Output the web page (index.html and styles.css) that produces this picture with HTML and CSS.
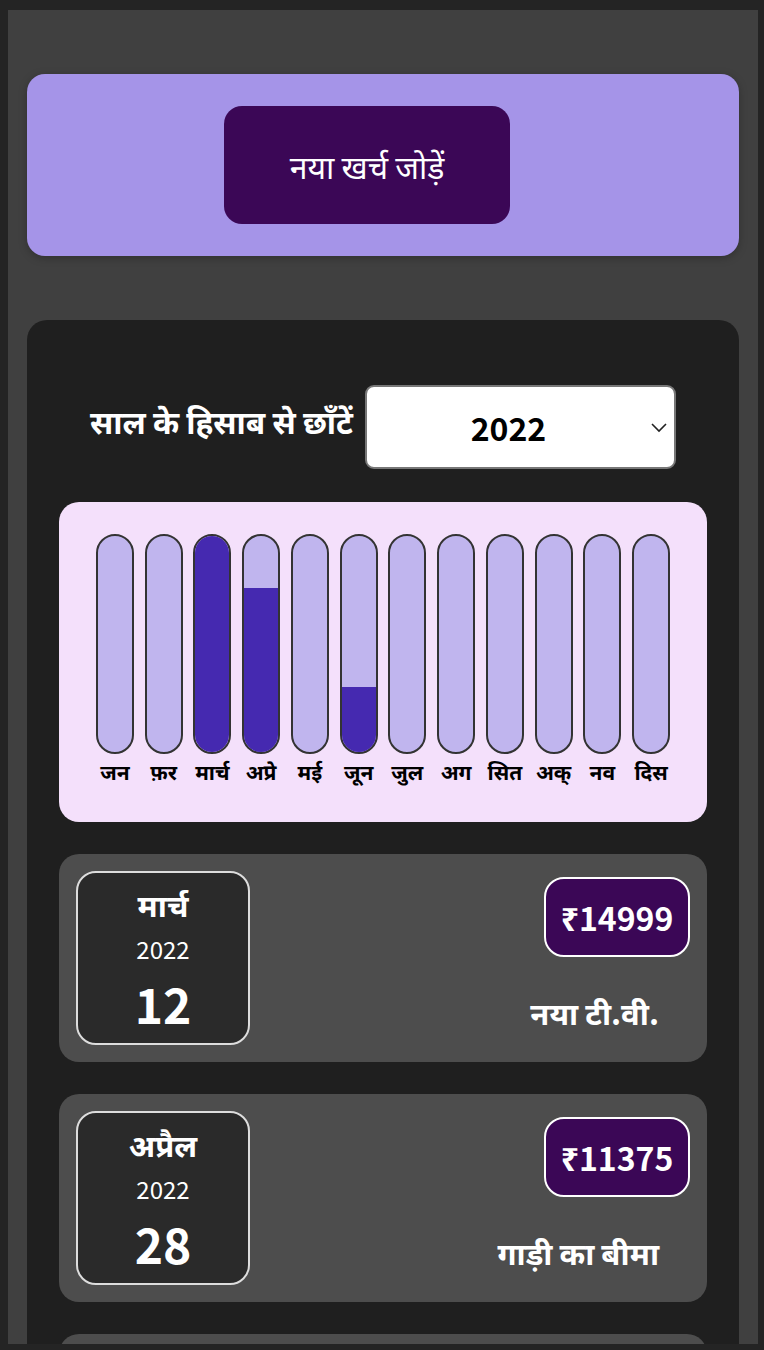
FILE: index.html
```html
<!DOCTYPE html>
<html lang="hi">
<head>
<meta charset="utf-8">
<title>खर्च</title>
<link rel="stylesheet" href="styles.css">
</head>
<body>
<div class="app">
  <section class="new-expense">
    <button class="add-btn" type="button">नया खर्च जोड़ें</button>
  </section>

  <section class="expenses">
    <div class="filter">
      <label class="filter-label" for="year">साल के हिसाब से छाँटें</label>
      <div class="select-wrap">
        <select id="year" class="year-select">
          <option>2022</option>
          <option>2021</option>
          <option>2020</option>
        </select>
        <svg class="chev" width="18" height="12" viewBox="0 0 18 12"><path d="M2 3l7 7 7-7" fill="none" stroke="#222" stroke-width="1.6"/></svg>
      </div>
    </div>

    <div class="chart">
      <div class="col"><div class="bar"><div class="fill" style="height:0%"></div></div><span class="lbl">जन</span></div>
      <div class="col"><div class="bar"><div class="fill" style="height:0%"></div></div><span class="lbl">फ़र</span></div>
      <div class="col"><div class="bar"><div class="fill" style="height:100%"></div></div><span class="lbl">मार्च</span></div>
      <div class="col"><div class="bar"><div class="fill" style="height:76%"></div></div><span class="lbl">अप्रे</span></div>
      <div class="col"><div class="bar"><div class="fill" style="height:0%"></div></div><span class="lbl">मई</span></div>
      <div class="col"><div class="bar"><div class="fill" style="height:30%"></div></div><span class="lbl">जून</span></div>
      <div class="col"><div class="bar"><div class="fill" style="height:0%"></div></div><span class="lbl">जुल</span></div>
      <div class="col"><div class="bar"><div class="fill" style="height:0%"></div></div><span class="lbl">अग</span></div>
      <div class="col"><div class="bar"><div class="fill" style="height:0%"></div></div><span class="lbl">सित</span></div>
      <div class="col"><div class="bar"><div class="fill" style="height:0%"></div></div><span class="lbl">अक्</span></div>
      <div class="col"><div class="bar"><div class="fill" style="height:0%"></div></div><span class="lbl">नव</span></div>
      <div class="col"><div class="bar"><div class="fill" style="height:0%"></div></div><span class="lbl">दिस</span></div>
    </div>

    <ul class="list">
      <li class="item">
        <div class="date">
          <div class="d-month">मार्च</div>
          <div class="d-year">2022</div>
          <div class="d-day">12</div>
        </div>
        <div class="info">
          <div class="price">₹14999</div>
          <h2 class="title">नया टी.वी.</h2>
        </div>
      </li>
      <li class="item">
        <div class="date">
          <div class="d-month">अप्रैल</div>
          <div class="d-year">2022</div>
          <div class="d-day">28</div>
        </div>
        <div class="info">
          <div class="price">₹11375</div>
          <h2 class="title">गाड़ी का बीमा</h2>
        </div>
      </li>
      <li class="item">
        <div class="date">
          <div class="d-month">जून</div>
          <div class="d-year">2022</div>
          <div class="d-day">02</div>
        </div>
        <div class="info">
          <div class="price">₹4500</div>
          <h2 class="title">नई मेज़</h2>
        </div>
      </li>
    </ul>
  </section>
</div>
</body>
</html>
```

FILE: styles.css
```css
* { box-sizing: border-box; }

html, body {
  margin: 0;
  background: #242424;
}

body {
  padding: 10px 6px 6px 8px;
  font-family: "Noto Sans CJK SC", "Noto Sans", sans-serif;
  color: #fff;
}

.app {
  height: 1334px;
  overflow: hidden;
  background: #404040;
  padding: 64px 19px 0 19px;
}

.new-expense {
  background: #a594e8;
  border-radius: 18px;
  padding: 32px 32px 32px 0;
  display: flex;
  justify-content: center;
  box-shadow: 0 2px 8px rgba(0,0,0,0.25);
}

.add-btn {
  width: 286px;
  height: 118px;
  border: none;
  border-radius: 18px;
  background: #3b0756;
  color: #fff;
  font-family: inherit;
  font-size: 32px;
  font-weight: 400;
  cursor: pointer;
}

.expenses {
  margin-top: 64px;
  background: #1f1f1f;
  border-radius: 20px;
  padding: 65px 32px 32px;
}

.filter {
  display: flex;
  justify-content: center;
  align-items: center;
  gap: 12px;
}

.filter-label {
  font-size: 31.5px;
  font-weight: 700;
  color: #fff;
  margin-top: -14px;
}

.select-wrap {
  position: relative;
}

.year-select {
  appearance: none;
  -webkit-appearance: none;
  width: 311px;
  height: 84px;
  border: 2px solid #777;
  border-radius: 9px;
  background: #fff;
  color: #000;
  font-family: inherit;
  font-size: 32px;
  font-weight: 700;
  text-align: center;
  text-align-last: center;
  padding: 0 24px 0 0;
}

.chev {
  position: absolute;
  right: 8px;
  top: 36px;
  pointer-events: none;
}

.chart {
  margin-top: 33px;
  background: #f4e0fb;
  border-radius: 20px;
  height: 320px;
  padding: 32px 0 0;
  display: flex;
  justify-content: center;
}

.col {
  width: 48.75px;
  flex: none;
  display: flex;
  flex-direction: column;
  align-items: center;
}

.bar {
  width: 38px;
  height: 220px;
  border: 2px solid #333;
  border-radius: 19px;
  background: #c0b5ee;
  overflow: hidden;
  display: flex;
  flex-direction: column;
  justify-content: flex-end;
}

.fill {
  background: #4529b0;
  width: 100%;
}

.lbl {
  margin-top: 2px;
  font-size: 21px;
  font-weight: 700;
  color: #000;
  white-space: nowrap;
}

.list {
  list-style: none;
  margin: 32px 0 0;
  padding: 0;
  display: flex;
  flex-direction: column;
  gap: 32px;
}

.item {
  background: #4d4d4d;
  border-radius: 20px;
  height: 208px;
  padding: 17px;
  display: flex;
  gap: 20px;
}

.date {
  width: 174px;
  height: 174px;
  flex: none;
  background: #2a2a2a;
  border: 2px solid #ddd;
  border-radius: 20px;
  display: flex;
  flex-direction: column;
  align-items: center;
  justify-content: center;
}

.d-month {
  font-size: 31px;
  font-weight: 700;
  line-height: 54px;
}

.d-year {
  font-size: 24px;
  font-weight: 400;
  line-height: 36px;
}

.d-day {
  font-size: 48px;
  font-weight: 700;
  line-height: 72px;
}

.info {
  flex: 1;
  display: flex;
  flex-direction: column;
  align-items: flex-end;
}

.price {
  margin-top: 6px;
  width: 146px;
  height: 80px;
  background: #3b0756;
  border: 2px solid #fff;
  border-radius: 20px;
  display: flex;
  align-items: center;
  justify-content: center;
  font-size: 32px;
  font-weight: 700;
}

.title {
  margin: 32px 31px 0 0;
  font-size: 31px;
  font-weight: 700;
}
```
